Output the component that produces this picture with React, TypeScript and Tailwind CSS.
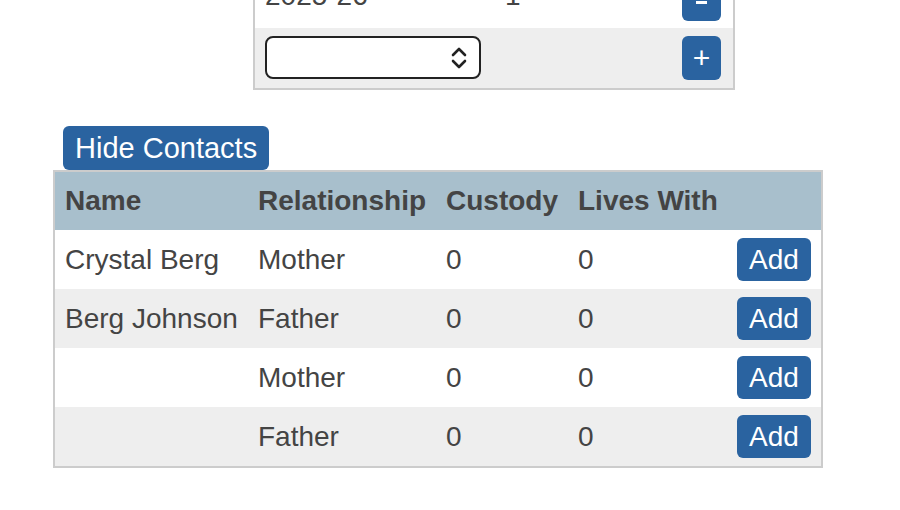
const contacts = [
  { name: 'Crystal Berg', relationship: 'Mother', custody: 0, livesWith: 0 },
  { name: 'Berg Johnson', relationship: 'Father', custody: 0, livesWith: 0 },
  { name: '', relationship: 'Mother', custody: 0, livesWith: 0 },
  { name: '', relationship: 'Father', custody: 0, livesWith: 0 },
];

function UpDown() {
  return (
    <svg width="16" height="22" viewBox="0 0 16 22" fill="none" stroke="#222" strokeWidth="2.6" strokeLinecap="round" strokeLinejoin="round">
      <path d="M2 8 L8 2 L14 8" />
      <path d="M2 14 L8 20 L14 14" />
    </svg>
  );
}

export default function App() {
  return (
    <div className="w-[900px] h-[510px] overflow-hidden bg-white text-[#444] font-['Liberation_Sans',Arial,sans-serif]">
      {/* Years panel (scrolled, top row cut off) */}
      <div className="-mt-[33px] ml-[253px] w-[482px] border-2 border-[#ccc]">
        <div className="flex items-center h-[59px] bg-white pl-[10px] pr-[12px] text-[28px]">
          <span className="w-[240px] -mt-[6px]">2025-26</span>
          <span className="flex-1 -mt-[6px]">1</span>
          <button className="w-[39px] h-[44px] rounded-[6px] bg-[#2a63a0] flex items-end justify-center pb-[17px]">
            <span className="block w-[11px] h-[3px] bg-white" />
          </button>
        </div>
        <div className="flex items-start h-[60px] bg-[#eee] pt-[8px] pl-[10px] pr-[12px]">
          <div className="w-[216px] h-[43px] rounded-[8px] border-2 border-[#222] bg-white flex items-center justify-end pr-[12px]">
            <UpDown />
          </div>
          <div className="flex-1" />
          <button className="w-[39px] h-[44px] rounded-[6px] bg-[#2a63a0] text-white text-[30px] leading-none flex items-center justify-center">+</button>
        </div>
      </div>

      {/* Contacts */}
      <div className="mt-[36px] ml-[53px]">
        <button className="ml-[10px] h-[44px] px-[12px] rounded-[6px] bg-[#2a63a0] text-white text-[29px] leading-none">
          Hide Contacts
        </button>
        <table className="table-fixed w-[770px] border-2 border-[#ccc] border-separate border-spacing-0 text-[28px]">
          <colgroup>
            <col className="w-[193px]" />
            <col className="w-[188px]" />
            <col className="w-[132px]" />
            <col className="w-[159px]" />
            <col className="w-[94px]" />
          </colgroup>
          <thead>
            <tr className="h-[58px] bg-[#a8bfcc] text-left font-bold">
              <th className="pl-[10px]">Name</th>
              <th className="pl-[10px]">Relationship</th>
              <th className="pl-[10px]">Custody</th>
              <th className="pl-[10px]">Lives With</th>
              <th />
            </tr>
          </thead>
          <tbody>
            {contacts.map((c, i) => (
              <tr key={i} className={`h-[59px] ${i % 2 === 0 ? 'bg-white' : 'bg-[#eee]'}`}>
                <td className="pl-[10px] whitespace-nowrap">{c.name}</td>
                <td className="pl-[10px]">{c.relationship}</td>
                <td className="pl-[10px]">{c.custody}</td>
                <td className="pl-[10px]">{c.livesWith}</td>
                <td className="pr-[10px] text-right">
                  <button className="w-[74px] h-[43px] rounded-[6px] bg-[#2a63a0] text-white text-[28px] leading-none">Add</button>
                </td>
              </tr>
            ))}
          </tbody>
        </table>
      </div>
    </div>
  );
}
